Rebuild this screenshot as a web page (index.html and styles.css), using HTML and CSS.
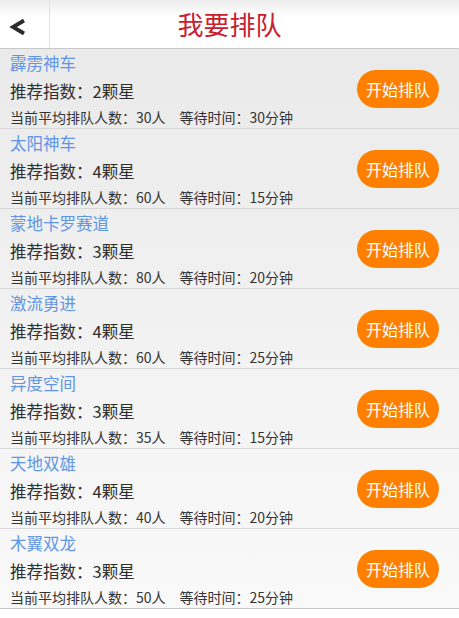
FILE: index.html
```html
<!DOCTYPE html>
<html lang="zh">
<head>
<meta charset="utf-8">
<title>我要排队</title>
<link rel="stylesheet" href="styles.css">
</head>
<body>
<header class="topbar">
  <div class="back">
    <svg width="18" height="18" viewBox="0 0 18 18"><polyline points="15,2.5 4,9 15,15.5" fill="none" stroke="#2b2b2b" stroke-width="3.8" stroke-linejoin="miter" stroke-linecap="butt"/></svg>
  </div>
  <h1 class="title">我要排队</h1>
  <div class="spacer"></div>
</header>
<main class="list">
  <div class="row">
    <div class="info">
      <div class="name">霹雳神车</div>
      <div class="rate">推荐指数：2颗星</div>
      <div class="meta">当前平均排队人数：30人<span class="wait">等待时间：30分钟</span></div>
    </div>
    <button class="btn">开始排队</button>
  </div>
  <div class="row">
    <div class="info">
      <div class="name">太阳神车</div>
      <div class="rate">推荐指数：4颗星</div>
      <div class="meta">当前平均排队人数：60人<span class="wait">等待时间：15分钟</span></div>
    </div>
    <button class="btn">开始排队</button>
  </div>
  <div class="row">
    <div class="info">
      <div class="name">蒙地卡罗赛道</div>
      <div class="rate">推荐指数：3颗星</div>
      <div class="meta">当前平均排队人数：80人<span class="wait">等待时间：20分钟</span></div>
    </div>
    <button class="btn">开始排队</button>
  </div>
  <div class="row">
    <div class="info">
      <div class="name">激流勇进</div>
      <div class="rate">推荐指数：4颗星</div>
      <div class="meta">当前平均排队人数：60人<span class="wait">等待时间：25分钟</span></div>
    </div>
    <button class="btn">开始排队</button>
  </div>
  <div class="row">
    <div class="info">
      <div class="name">异度空间</div>
      <div class="rate">推荐指数：3颗星</div>
      <div class="meta">当前平均排队人数：35人<span class="wait">等待时间：15分钟</span></div>
    </div>
    <button class="btn">开始排队</button>
  </div>
  <div class="row">
    <div class="info">
      <div class="name">天地双雄</div>
      <div class="rate">推荐指数：4颗星</div>
      <div class="meta">当前平均排队人数：40人<span class="wait">等待时间：20分钟</span></div>
    </div>
    <button class="btn">开始排队</button>
  </div>
  <div class="row">
    <div class="info">
      <div class="name">木翼双龙</div>
      <div class="rate">推荐指数：3颗星</div>
      <div class="meta">当前平均排队人数：50人<span class="wait">等待时间：25分钟</span></div>
    </div>
    <button class="btn">开始排队</button>
  </div>
</main>
</body>
</html>
```
FILE: styles.css
```css
* { box-sizing: border-box; }
html, body {
  margin: 0;
  padding: 0;
  background: #ffffff;
  font-family: "Noto Sans CJK SC", "Noto Sans", "DejaVu Sans", sans-serif;
}
.topbar {
  display: grid;
  grid-template-columns: 50px 1fr 50px;
  height: 49px;
  background: linear-gradient(#ededed 0%, #ffffff 35%, #ffffff 100%);
  border-bottom: 1px solid #c9c9c9;
}
.back {
  display: flex;
  align-items: center;
  justify-content: flex-start;
  padding-left: 9px;
  padding-top: 6px;
  border-right: 1px solid #e0e0e0;
}
.title {
  margin: 0;
  text-align: center;
  font-size: 26px;
  font-weight: 400;
  line-height: 47px;
  color: #c8202e;
}
.list {
  background: linear-gradient(#eaeaea 0%, #f9f9f9 100%);
}
.row {
  display: flex;
  align-items: center;
  justify-content: space-between;
  height: 80px;
  border-bottom: 1px solid #d8d8d8;
  padding: 0 20px 0 10px;
}
.row:last-child {
  border-bottom: 1px solid #c6c6c6;
}
.info {
  display: flex;
  flex-direction: column;
}
.name {
  font-size: 16.5px;
  line-height: 28px;
  color: #5f95e4;
}
.rate {
  font-size: 16.5px;
  line-height: 29px;
  color: #2e2e2e;
}
.meta {
  font-size: 14px;
  line-height: 22px;
  color: #333333;
}
.wait {
  margin-left: 14px;
}
.btn {
  border: none;
  background: #ff8000;
  color: #ffffff;
  font-family: inherit;
  font-size: 16px;
  height: 38px;
  width: 82px;
  padding: 0;
  border-radius: 19px;
  line-height: 38px;
}
```
